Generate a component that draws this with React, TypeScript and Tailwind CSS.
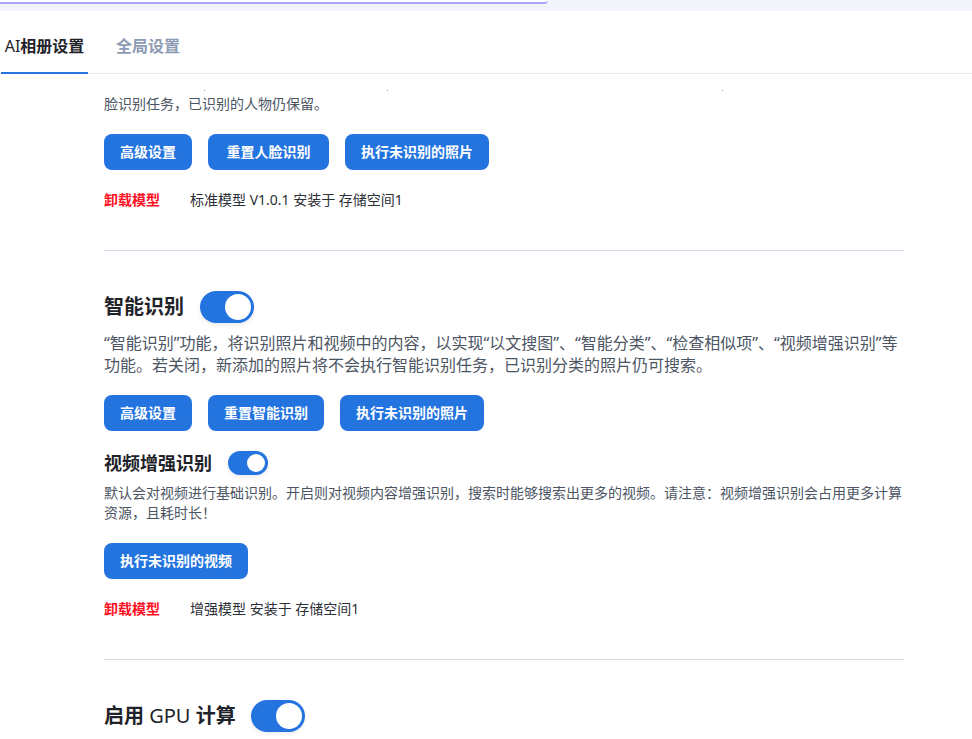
import { ReactNode } from "react";

const font = "font-['Noto_Sans','Noto_Sans_CJK_SC',sans-serif]";

const Btn = ({ children, wide }: { children: string; wide?: boolean }) => (
  <button className={`h-9 rounded-lg bg-[#2474e0] text-sm font-bold text-white ${wide ? "w-[121px]" : "px-4"}`}>
    {children}
  </button>
);

const Toggle = ({ small }: { small?: boolean }) =>
  small ? (
    <div className="flex h-6 w-10 items-center justify-end rounded-full bg-[#2474e0] pr-[3px] shadow-[0_2px_4px_rgba(0,0,0,0.08)]">
      <div className="h-[18px] w-[18px] rounded-full bg-white" />
    </div>
  ) : (
    <div className="flex h-8 w-[54px] items-center justify-end rounded-full bg-[#2474e0] pr-[3px] shadow-[0_2px_4px_rgba(0,0,0,0.08)]">
      <div className="h-[26px] w-[26px] rounded-full bg-white" />
    </div>
  );

const Model = ({ text }: { text: string }) => (
  <div className="mt-5 flex items-center text-sm leading-5">
    <span className="w-[86px] font-bold text-[#ff0f23]">卸载模型</span>
    <span className="text-[#2b2f36]">{text}</span>
  </div>
);

const Title = ({ children }: { children: ReactNode }) => (
  <h2 className="text-xl leading-8 font-semibold text-[#1f2329]">{children}</h2>
);

export default function App() {
  return (
    <div className={`${font} h-[739px] w-[972px] overflow-hidden bg-white`}>
      <div className="h-[11px] bg-[#f1f4fa]">
        <div className="h-1 w-[548px] rounded-br-[10px] border-b-2 border-[#a9a4f5] bg-white" />
      </div>

      <div className="flex h-[63px] border-b border-[#e4e8f0] pl-px">
        <div className="flex h-[63px] w-[87px] items-center justify-center border-b-2 border-[#2474e0] pt-2 text-base font-semibold text-[#1f2329]">
          <span className="font-normal">AI</span>相册设置
        </div>
        <div className="flex h-[62px] items-center pt-2 pl-7 text-base font-semibold text-[#8c9bb3]">全局设置</div>
      </div>

      <div className="w-[904px] pl-[104px]">
        {/* bottom of the line scrolled out of view */}
        <div className="mt-4 flex h-px">
          <div className="ml-[100px] h-px w-px bg-[#8a8f98]" />
          <div className="ml-[182px] h-px w-px bg-[#8a8f98]" />
          <div className="ml-[334px] h-px w-px bg-[#8a8f98]" />
        </div>
        <p className="mt-[2px] text-sm leading-[22px] text-[#4c5563]">脸识别任务，已识别的人物仍保留。</p>
        <div className="mt-[19px] flex gap-4">
          <Btn>高级设置</Btn>
          <Btn wide>重置人脸识别</Btn>
          <Btn>执行未识别的照片</Btn>
        </div>
        <Model text="标准模型 V1.0.1 安装于 存储空间1" />
        <div className="mt-10 border-t border-[#cdd6e4]" />

        <div className="mt-10 flex items-center gap-4">
          <Title>智能识别</Title>
          <Toggle />
        </div>
        <p className="mt-[9px] text-base leading-[22px] text-[#4c5563]">
          “智能识别”功能，将识别照片和视频中的内容，以实现“以文搜图”、“智能分类”、“检查相似项”、“视频增强识别”等功能。若关闭，新添加的照片将不会执行智能识别任务，已识别分类的照片仍可搜索。
        </p>
        <div className="mt-[19px] flex gap-4">
          <Btn>高级设置</Btn>
          <Btn>重置智能识别</Btn>
          <Btn>执行未识别的照片</Btn>
        </div>
        <div className="mt-5 flex items-center gap-4">
          <h3 className="text-lg leading-6 font-semibold text-[#1f2329]">视频增强识别</h3>
          <Toggle small />
        </div>
        <p className="mt-2 text-sm leading-5 text-[#4c5563]">
          默认会对视频进行基础识别。开启则对视频内容增强识别，搜索时能够搜索出更多的视频。请注意：视频增强识别会占用更多计算资源，且耗时长！
        </p>
        <div className="mt-5 flex">
          <Btn>执行未识别的视频</Btn>
        </div>
        <Model text="增强模型 安装于 存储空间1" />
        <div className="mt-10 border-t border-[#d0d7de]" />

        <div className="mt-10 flex items-center gap-[15px]">
          <Title>
            启用 <span className="font-normal">GPU</span> 计算
          </Title>
          <Toggle />
        </div>
      </div>
    </div>
  );
}
